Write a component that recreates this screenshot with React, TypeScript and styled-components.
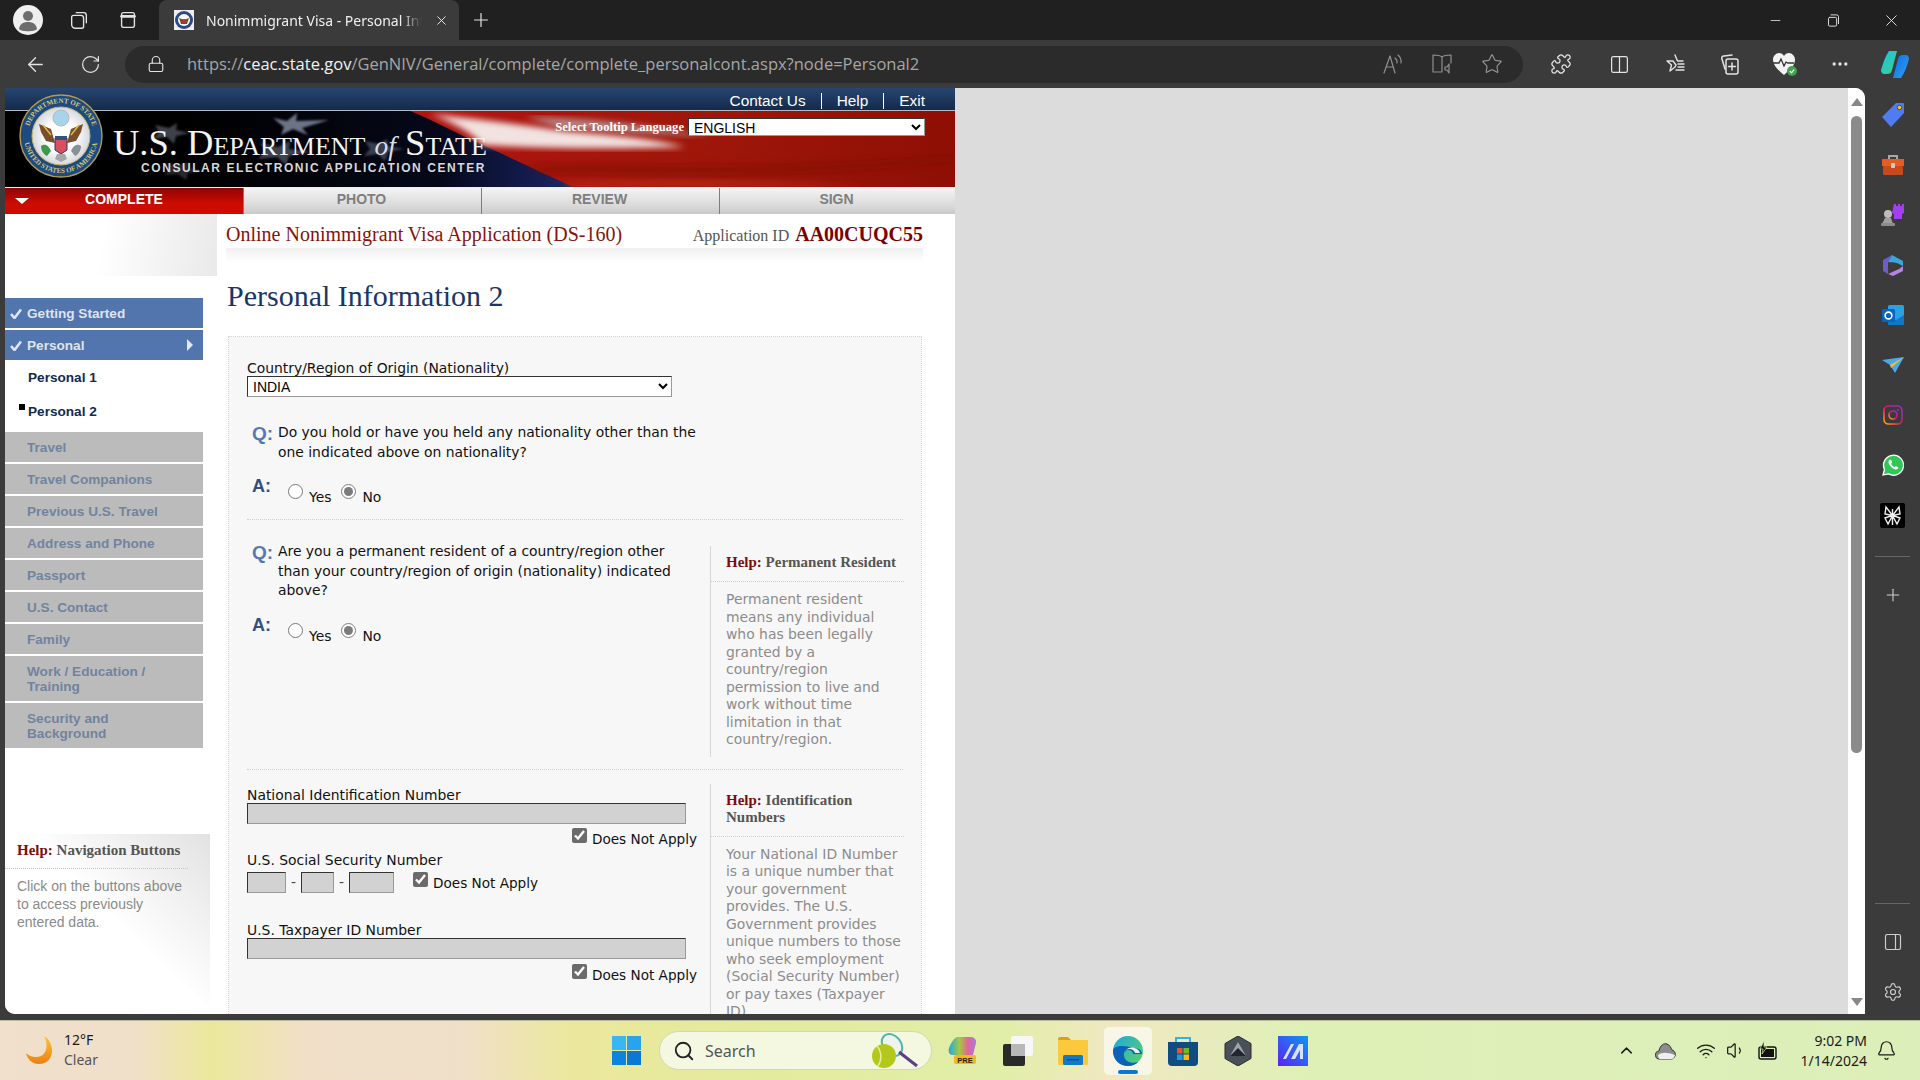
import type { ReactNode } from "react";
import styled, { createGlobalStyle } from "styled-components";
import {
  ArrowLeft,
  ChevronUp,
  Columns2,
  Ellipsis,
  Lock,
  Plus,
  Puzzle,
  RotateCw,
  Search,
  Settings,
  Star,
  Volume1,
  Wifi,
  X,
  Bell,
  PanelRight,
  Minus,
} from "lucide-react";

const GlobalStyle = createGlobalStyle`
  html, body {
    margin: 0;
    padding: 0;
    width: 100%;
    height: 100%;
    overflow: hidden;
    background: #3b3b3b;
  }
  * { box-sizing: border-box; }
`;

const Screen = styled.div`
  width: 1920px;
  height: 1080px;
  display: flex;
  flex-direction: column;
  overflow: hidden;
  background: #3b3b3b;
  font-family: "Noto Sans", sans-serif;
`;

/* browser chrome */
const TitleBar = styled.div`
  height: 40px;
  flex: none;
  display: flex;
  align-items: flex-end;
  background: #202020;
  color: #e8e8e8;
`;

const Slot = styled.div<{ $w?: number; $ml?: number }>`
  width: ${(p) => p.$w ?? 55}px;
  height: 36px;
  margin-left: ${(p) => p.$ml ?? 0}px;
  flex: none;
  display: flex;
  align-items: center;
  justify-content: center;
  color: #e4e4e4;
`;

const TitleSlot = styled(Slot)`
  height: 40px;
`;

const Tab = styled.div`
  width: 300px;
  height: 40px;
  flex: none;
  margin-left: 4px;
  padding: 0 10px 0 15px;
  display: flex;
  align-items: center;
  gap: 12px;
  background: #3b3b3b;
  border-radius: 8px 8px 0 0;
  font-size: 14px;
  color: #f0f0f0;
`;

const TabTitle = styled.span`
  flex: 1;
  white-space: nowrap;
  overflow: hidden;
  -webkit-mask-image: linear-gradient(90deg, #000 90%, transparent);
  mask-image: linear-gradient(90deg, #000 90%, transparent);
`;

const WindowControls = styled.div`
  margin-left: auto;
  display: flex;
`;

const Toolbar = styled.div`
  height: 48px;
  flex: none;
  display: flex;
  align-items: center;
  padding-left: 10px;
  background: #3b3b3b;
`;

const AddressPill = styled.div`
  width: 1398px;
  height: 37px;
  margin-left: 5px;
  flex: none;
  display: flex;
  align-items: center;
  background: #2b2b2b;
  border-radius: 19px;
  padding-right: 6px;
`;

const Url = styled.div`
  flex: 1;
  padding-bottom: 2px;
  font-family: "Open Sans", sans-serif;
  font-size: 16.5px;
  color: #a6a6a6;
  white-space: nowrap;
  b {
    font-weight: 400;
    color: #f2f2f2;
  }
`;

const ToolbarSep = styled.div`
  width: 1px;
  height: 28px;
  margin: 0 2px;
  background: #666;
`;

const Middle = styled.div`
  flex: 1;
  min-height: 0;
  display: flex;
`;

const Viewport = styled.div`
  width: 1860px;
  height: 926px;
  margin-left: 5px;
  flex: none;
  display: flex;
  background: #fff;
  overflow: hidden;
  border-radius: 0 10px 0 10px;
`;

const Gutter = styled.div`
  flex: 1;
  background: #dcdcdc;
`;

const Scrollbar = styled.div`
  width: 17px;
  flex: none;
  display: flex;
  flex-direction: column;
  align-items: center;
  justify-content: space-between;
  padding: 10px 0 8px;
  background: #fff;
`;

const ScrollTop = styled.div`
  display: flex;
  flex-direction: column;
  align-items: center;
`;

const ScrollArrow = styled.div<{ $down?: boolean }>`
  width: 0;
  height: 0;
  border-left: 6px solid transparent;
  border-right: 6px solid transparent;
  ${(p) => (p.$down ? "border-top: 8px solid #888;" : "border-bottom: 8px solid #888;")}
`;

const ScrollThumb = styled.div`
  width: 11px;
  height: 637px;
  margin-top: 10px;
  background: #8b8b8b;
  border-radius: 6px;
`;

const EdgeRail = styled.div`
  width: 55px;
  flex: none;
  display: flex;
  flex-direction: column;
  align-items: center;
  padding: 2px 0 3px;
  color: #cfcfcf;
`;

const RailSlot = styled.div`
  width: 55px;
  height: 50px;
  flex: none;
  display: flex;
  align-items: center;
  justify-content: center;
`;

const RailSep = styled.div<{ $top?: string }>`
  width: 35px;
  height: 1px;
  flex: none;
  margin-top: ${(p) => p.$top ?? "16px"};
  margin-bottom: 13px;
  background: #666;
`;

/* the visa site */
const Site = styled.div`
  width: 950px;
  flex: none;
  font-family: "DejaVu Sans", Verdana, sans-serif;
  font-size: 13.9px;
  color: #111;
`;

const Header = styled.header`
  position: relative;
`;

const TopBar = styled.div`
  height: 23px;
  display: flex;
  justify-content: flex-end;
  align-items: center;
  padding: 3px 30px 0 0;
  border-bottom: 1px solid #b4bac4;
  background: linear-gradient(180deg, #27466f, #142a4b);
  font-family: "Liberation Sans", Arial, sans-serif;
  font-size: 15.4px;
  color: #fff;
`;

const TopLink = styled.span<{ $sep?: boolean }>`
  padding-left: ${(p) => (p.$sep ? "15px" : 0)};
  margin-left: ${(p) => (p.$sep ? "15px" : 0)};
  border-left: ${(p) => (p.$sep ? "1px solid #fff" : "none")};
  line-height: 16px;
`;

const Banner = styled.div`
  position: relative;
  height: 77px;
  display: flex;
  justify-content: space-between;
  border-bottom: 1px solid #eee;
  background: #000;
  overflow: hidden;
`;

const BannerArt = styled.svg`
  position: absolute;
  inset: 0;
  width: 100%;
  height: 100%;
`;

const Brand = styled.div`
  position: relative;
  margin-left: 108px;
  padding-top: 14px;
  color: #f4f4f4;
`;

const BrandName = styled.div`
  font-family: "Liberation Serif", "Times New Roman", serif;
  font-size: 36.5px;
  line-height: 36px;
  font-variant: small-caps;
  white-space: nowrap;
  i {
    font-variant: normal;
    font-size: 27.5px;
    color: #d9dde6;
  }
`;

const BrandSub = styled.div`
  margin: -3px 0 0 28px;
  font-family: "Liberation Sans", Arial, sans-serif;
  font-size: 12px;
  line-height: 14px;
  font-weight: 700;
  letter-spacing: 1.57px;
  color: #d8d8d8;
  white-space: nowrap;
`;

const LangPicker = styled.div`
  position: relative;
  display: flex;
  align-items: center;
  align-self: flex-start;
  gap: 4px;
  margin: 7px 30px 0 0;
  font-family: "Liberation Serif", "Times New Roman", serif;
  font-size: 12.6px;
  font-weight: 700;
  color: #fff;
`;

const Select = styled.select<{ $w: number }>`
  width: ${(p) => p.$w}px;
  height: ${(p) => (p.$w > 300 ? 21 : 18)}px;
  padding: 0 1px;
  border-width: 1px;
  border-style: solid;
  border-color: #333 #999 #999 #333;
  border-radius: 0;
  background: #fff;
  font-family: "Liberation Sans", Arial, sans-serif;
  font-size: 14px;
  color: #000;
`;

const Seal = styled.svg`
  position: absolute;
  left: 14px;
  top: 6px;
  width: 84px;
  height: 84px;
`;

const Steps = styled.nav`
  height: 26px;
  display: flex;
`;

const Step = styled.div<{ $active?: boolean }>`
  position: relative;
  width: 238px;
  flex: none;
  display: flex;
  align-items: center;
  justify-content: center;
  padding: 0 ${(p) => (p.$active ? 0 : 2)}px 4px 0;
  font-family: "Liberation Sans", Arial, sans-serif;
  font-size: 14px;
  font-weight: 700;
  color: ${(p) => (p.$active ? "#fff" : "#7e7e7e")};
  background: ${(p) =>
    p.$active
      ? "linear-gradient(180deg, #8f0404, #cc0c00 60%)"
      : "linear-gradient(180deg, #f4f4f4, #d9d9d9 70%, #c9c9c9)"};
  border-left: ${(p) => (p.$active ? "none" : "1px solid #7d7d7d")};
  &:last-child {
    width: 236px;
  }
`;

const StepArrow = styled.span`
  position: absolute;
  left: 10px;
  top: 10px;
  border-left: 7px solid transparent;
  border-right: 7px solid transparent;
  border-top: 6px solid #fff;
`;

const Body = styled.div`
  display: flex;
`;

const LeftCol = styled.aside`
  width: 212px;
  flex: none;
`;

const LeftFade = styled.div`
  height: 62px;
  background: linear-gradient(100deg, #fff 45%, #e9e9e9);
`;

const NavList = styled.div`
  width: 198px;
  margin-top: 22px;
  display: flex;
  flex-direction: column;
  gap: 2px;
  font-family: "Liberation Sans", Arial, sans-serif;
  font-size: 13.6px;
  font-weight: 700;
`;

const NavItem = styled.div<{ $done?: boolean }>`
  position: relative;
  min-height: 30px;
  display: flex;
  align-items: center;
  padding: 0 20px 0 22px;
  line-height: 15px;
  background: ${(p) => (p.$done ? "#5275ae" : "#bbbbbb")};
  color: ${(p) => (p.$done ? "#dfe4ec" : "#71849f")};
`;

const NavTall = styled(NavItem)`
  min-height: 45px;
`;

const NavTick = styled.svg`
  position: absolute;
  left: 5px;
  top: 10px;
  width: 12px;
  height: 11px;
`;

const NavCaret = styled.span`
  position: absolute;
  right: 10px;
  top: 9px;
  border-top: 6px solid transparent;
  border-bottom: 6px solid transparent;
  border-left: 6px solid #e4e8f0;
`;

const SubItem = styled.div<{ $current?: boolean }>`
  position: relative;
  height: 35px;
  margin-top: ${(p) => (p.$current ? "-4px" : 0)};
  display: flex;
  align-items: center;
  padding: 0 0 ${(p) => (p.$current ? 2 : 4)}px 23px;
  color: #13294f;
  &::before {
    content: "";
    display: ${(p) => (p.$current ? "block" : "none")};
    position: absolute;
    left: 14px;
    top: 9px;
    width: 6px;
    height: 6px;
    background: #000;
  }
`;

const NavHelp = styled.div`
  width: 205px;
  height: 200px;
  margin-top: 86px;
  padding-top: 6px;
  background: linear-gradient(to bottom left, #e2e2e2, #fff 45%);
`;

const HelpHead = styled.div`
  font-family: "Liberation Serif", "Times New Roman", serif;
  font-size: 15px;
  line-height: 17px;
  font-weight: 700;
  color: #555;
  b {
    color: #7d0c0c;
  }
`;

const NavHelpHead = styled(HelpHead)`
  width: 183px;
  padding: 2px 0 9px 12px;
  border-bottom: 1px dotted #c4c4c4;
`;

const NavHelpText = styled.div`
  width: 180px;
  padding: 8px 0 0 12px;
  font-family: "Liberation Sans", Arial, sans-serif;
  font-size: 14px;
  line-height: 18px;
  color: #8a8a8a;
`;

const MainCol = styled.main`
  flex: 1;
  min-width: 0;
  padding: 0 32px 0 9px;
`;

const AppHead = styled.div`
  height: 34px;
  display: flex;
  align-items: center;
  justify-content: space-between;
  padding-top: 6px;
  font-family: "Liberation Serif", "Times New Roman", serif;
`;

const AppTitle = styled.span`
  font-size: 20px;
  color: #85140c;
`;

const AppId = styled.span`
  font-size: 16px;
  color: #555;
  b {
    margin-left: 2px;
    font-size: 20px;
    color: #7d0000;
  }
`;

const AppStrip = styled.div`
  height: 14px;
  background: linear-gradient(180deg, #f0f0f0, #fff);
`;

const PageTitle = styled.h1`
  margin: 17px 0 0 1px;
  height: 57px;
  font-family: "Liberation Serif", "Times New Roman", serif;
  font-size: 30px;
  line-height: 34px;
  font-weight: 400;
  color: #1c3564;
`;

const FormBox = styled.section`
  width: 694px;
  min-height: 800px;
  margin-left: 2px;
  padding: 23px 18px 0;
  background: #f7f7f7;
  border: 1px dotted #e2d5bd;
`;

const FieldLabel = styled.div<{ $gap?: number }>`
  line-height: 16px;
  margin-bottom: ${(p) => p.$gap ?? 0}px;
`;

const QRow = styled.div<{ $top?: number }>`
  display: flex;
  width: 463px;
  margin-top: ${(p) => p.$top ?? 0}px;
  line-height: 19.5px;
`;

const QMark = styled.span<{ $answer?: boolean }>`
  width: 31px;
  flex: none;
  padding-left: 5px;
  font-family: "Liberation Sans", Arial, sans-serif;
  font-size: ${(p) => (p.$answer ? 18 : 19)}px;
  font-weight: 700;
  line-height: 21px;
  color: ${(p) => (p.$answer ? "#33507f" : "#5579b3")};
`;

const QText = styled.div`
  width: 420px;
`;

const ARow = styled.div`
  display: flex;
  align-items: flex-start;
  margin-top: 14px;
  height: 26px;
`;

const RadioGroup = styled.label`
  display: flex;
  align-items: flex-start;
  line-height: 16px;
  margin-right: 10px;
  &:first-of-type {
    margin-left: 10px;
  }
  span {
    margin: 13px 0 0 6px;
  }
`;

const Radio = styled.input`
  width: 15px;
  height: 15px;
  margin: 8px 0 0;
  accent-color: #7c7c7c;
`;

const Divider = styled.div<{ $top: number }>`
  margin-top: ${(p) => p.$top}px;
  border-top: 1px dotted #cfcfcf;
`;

const SplitRow = styled.div<{ $top: number }>`
  display: flex;
  margin-top: ${(p) => p.$top}px;
`;

const FormLeft = styled.div<{ $pad?: number }>`
  width: 463px;
  flex: none;
  padding-top: ${(p) => p.$pad ?? 0}px;
`;

const HelpCol = styled.div<{ $top?: number }>`
  flex: 1;
  margin-top: ${(p) => p.$top ?? 0}px;
  border-left: 1px solid #d6d6d6;
`;

const HelpColHead = styled(HelpHead)`
  padding: 8px 0 10px 15px;
  border-bottom: 1px dotted #cfcfcf;
`;

const HelpColText = styled.div`
  width: 193px;
  padding: 9px 0 8px 15px;
  line-height: 17.5px;
  color: #8c8c8c;
`;

const TextField = styled.input`
  display: block;
  width: 439px;
  height: 21px;
  padding: 0;
  border-width: 1px;
  border-style: solid;
  border-color: #333 #999 #999 #333;
  background: #d2d2d2;
`;

const ShortField = styled(TextField)<{ $w: number }>`
  width: ${(p) => p.$w}px;
`;

const CheckRow = styled.label<{ $top?: number }>`
  display: flex;
  justify-content: flex-end;
  align-items: flex-start;
  width: 450px;
  height: 24px;
  margin-top: ${(p) => p.$top ?? 4}px;
`;

const Check = styled.input`
  width: 15px;
  height: 15px;
  margin: 0 5px 0 0;
  accent-color: #6b6b6b;
`;

const CheckText = styled.span`
  margin-top: 3px;
  font-size: 13.6px;
  line-height: 16px;
`;

const SsnRow = styled.div`
  display: flex;
  align-items: flex-start;
  margin-bottom: 29px;
`;

const Dash = styled.span`
  width: 15px;
  text-align: center;
  line-height: 21px;
  color: #444;
`;

const SsnCheck = styled.label`
  display: flex;
  align-items: flex-start;
  margin-left: 19px;
`;

/* taskbar */
const Taskbar = styled.footer`
  height: 60px;
  flex: none;
  display: flex;
  align-items: center;
  border-top: 1px solid #b9bb9c;
  background: linear-gradient(
    90deg,
    #f0e0cc 0,
    #f0dfc8 7%,
    #ebe89c 11%,
    #f1dfc8 16%,
    #f0dfc8 24%,
    #ebe89c 30%,
    #e3eb9e 40%,
    #e1eea8 52%,
    #f0e8c2 58%,
    #dff0b6 68%,
    #dcefba 100%
  );
  color: #1b1b1b;
  font-size: 14px;
`;

const Weather = styled.div`
  width: 612px;
  flex: none;
  display: flex;
  align-items: center;
  padding: 0 0 2px 25px;
  gap: 9px;
`;

const WeatherText = styled.div`
  line-height: 20px;
  span {
    display: block;
    color: #555;
  }
`;

const SearchPill = styled.div`
  width: 273px;
  height: 39px;
  margin-left: 18px;
  flex: none;
  display: flex;
  align-items: center;
  gap: 10px;
  padding: 0 10px 0 13px;
  background: #f4f8e0;
  border: 1px solid #d3d8ae;
  border-radius: 20px;
  color: #555;
  font-size: 16px;
  span {
    flex: 1;
  }
`;

const Apps = styled.div`
  display: flex;
  margin-left: 7px;
  gap: 7px;
`;

const AppIcon = styled.div<{ $active?: boolean }>`
  position: relative;
  width: 48px;
  height: 48px;
  display: flex;
  align-items: center;
  justify-content: center;
  border-radius: 5px;
  background: ${(p) => (p.$active ? "rgba(255,255,255,.62)" : "transparent")};
  &::after {
    content: "";
    display: ${(p) => (p.$active ? "block" : "none")};
    position: absolute;
    left: 14px;
    bottom: 1px;
    width: 20px;
    height: 4px;
    border-radius: 2px;
    background: #0a78d4;
  }
`;

const Tray = styled.div`
  margin-left: auto;
  display: flex;
  align-items: center;
  padding-right: 15px;
`;

const TraySlot = styled.div<{ $w: number }>`
  width: ${(p) => p.$w}px;
  display: flex;
  justify-content: center;
`;

const Clock = styled.div`
  width: 76px;
  margin-left: 3px;
  text-align: right;
  line-height: 20px;
  white-space: nowrap;
`;

const Wide = ({ children, h = 20 }: { children: ReactNode; h?: number }) => (
  <svg width={h} height={h} viewBox="0 0 24 24" fill="none" stroke="currentColor" strokeWidth="1.5" strokeLinecap="round" strokeLinejoin="round">
    {children}
  </svg>
);

const Avatar = () => (
  <svg width="32" height="32" viewBox="0 0 32 32">
    <circle cx="16" cy="16" r="15" fill="#efefef" />
    <circle cx="16" cy="12" r="5" fill="#6d6d6d" />
    <path d="M7 25c1-6 5-7 9-7s8 1 9 7c-2 3-16 3-18 0z" fill="#6d6d6d" />
  </svg>
);

const DosSeal = ({ size = 20 }: { size?: number }) => (
  <svg width={size} height={size} viewBox="0 0 20 20">
    <rect width="20" height="20" fill="#eee" />
    <circle cx="10" cy="10" r="9" fill="#2a4a86" />
    <circle cx="10" cy="10" r="6" fill="#fff" />
    <path d="M5 8l5 2 5-2-2 6h-6z" fill="#7a4a22" />
    <rect x="8.5" y="9" width="3" height="4" fill="#b33" />
  </svg>
);

const FlagArt = () => (
  <BannerArt viewBox="0 0 950 76" preserveAspectRatio="none">
    <defs>
      <linearGradient id="navy" x1="0" x2="1">
        <stop offset="0" stopColor="#000" />
        <stop offset="0.6" stopColor="#050818" />
        <stop offset="0.85" stopColor="#141f55" />
        <stop offset="1" stopColor="#24357a" />
      </linearGradient>
      <linearGradient id="red" x1="0" x2="1">
        <stop offset="0" stopColor="#b01410" />
        <stop offset="0.5" stopColor="#a0170a" />
        <stop offset="1" stopColor="#8f0f05" />
      </linearGradient>
      <filter id="soft">
        <feGaussianBlur stdDeviation="3" />
      </filter>
      <filter id="softer">
        <feGaussianBlur stdDeviation="1.2" />
      </filter>
    </defs>
    <path d="M180 0H430L600 76H180z" fill="url(#navy)" />
    <path d="M405 0H950V76H568L478 34C450 22 430 10 405 0z" fill="url(#red)" />
    <path d="M425 3C470 8 520 14 560 20 610 24 650 28 680 36 620 38 540 38 478 34 465 20 445 10 425 3z" fill="#f2e2e0" filter="url(#soft)" />
    <path d="M520 6C580 7 640 13 705 26 650 22 600 20 556 17z" fill="#b98a88" filter="url(#soft)" />
    <path d="M520 54C640 50 760 62 950 44V50C780 70 640 62 540 64z" fill="#7d1005" opacity="0.5" filter="url(#soft)" />
    <path d="M560 72C680 66 780 70 860 76H560z" fill="#c23a1c" opacity="0.5" filter="url(#soft)" />
    <g fill="#9aa3ba" filter="url(#softer)">
      <path d="M268 7l14 3 10-8-1 8 33-1-27 8 6 7-15-6-12 6 3-8z" opacity="0.7" />
      <path d="M150 14l14 3 8-5-1 7 14 3-14 3-2 8-7-7-14 2 6-7z" opacity="0.4" />
      <path d="M255 32l18 4 12-6-1 8 22 3-22 4-3 9-9-8-19 2 8-8z" opacity="0.4" />
      <path d="M360 30l14 3 8-5 1 7 16 3-16 3-3 9-7-7-14 2 6-7z" opacity="0.35" />
      <path d="M160 52l14 2 9-3v6l16 3-16 2-2 7-8-6-14 1 6-6z" opacity="0.25" />
    </g>
  </BannerArt>
);

const SealArt = () => (
  <Seal viewBox="0 0 84 84">
    <defs>
      <path id="ringTop" d="M9 42a33 33 0 0 1 66 0" />
      <path id="ringBot" d="M5 42a37 37 0 0 0 74 0" />
      <radialGradient id="sealBg">
        <stop offset="0.5" stopColor="#fff" />
        <stop offset="1" stopColor="#d5d8dc" />
      </radialGradient>
    </defs>
    <circle cx="42" cy="42" r="41" fill="#1d4a80" stroke="#b59c4a" strokeWidth="1.4" />
    <circle cx="42" cy="42" r="29" fill="url(#sealBg)" stroke="#c4b26a" />
    <text fontFamily="Liberation Serif, serif" fontSize="7" fontWeight="700" fill="#d8c878">
      <textPath href="#ringTop" startOffset="50%" textAnchor="middle">DEPARTMENT OF STATE</textPath>
    </text>
    <text fontFamily="Liberation Serif, serif" fontSize="7" fontWeight="700" fill="#d8c878">
      <textPath href="#ringBot" startOffset="50%" textAnchor="middle">UNITED STATES OF AMERICA</textPath>
    </text>
    <circle cx="42" cy="24" r="8" fill="#a8d4ea" stroke="#b8b8b8" />
    <path d="M20 30l12 5 4 14-9-2-5-9zM64 30l-12 5-4 14 9-2 5-9z" fill="#7a4e2a" />
    <path d="M24 31l8 10M60 31l-8 10" stroke="#d6bb4a" strokeWidth="1.5" />
    <path d="M36 44h12v12l-6 4-6-4z" fill="#d9505a" stroke="#1d3a6e" />
    <rect x="36" y="42" width="12" height="4" fill="#33507f" />
    <path d="M22 52c4-3 8 0 10 5l-4 5c-4-2-6-6-6-10z" fill="#3b9a4a" />
    <path d="M62 52c-4-3-8 0-10 5l4 5c4-2 6-6 6-10z" fill="#8a8f96" />
    <path d="M38 60h8l2 5-6 3-6-3z" fill="#a7a7a7" />
  </Seal>
);

const Tick = () => (
  <NavTick viewBox="0 0 12 11">
    <path d="M1 6l3.5 4L11 1.5" fill="none" stroke="#dfe6f2" strokeWidth="2.6" />
  </NavTick>
);

/* rail and taskbar logos */
const TagLogo = () => (
  <svg width="24" height="26" viewBox="0 0 24 26">
    <path d="M15 1h7a1 1 0 0 1 1 1v9L10 25 1 15z" fill="#4f7cf0" />
    <circle cx="18.5" cy="5.5" r="2.2" fill="#f3c91e" stroke="#333" strokeWidth=".8" />
  </svg>
);
const ToolboxLogo = () => (
  <svg width="24" height="22" viewBox="0 0 24 22">
    <path d="M8 5V2h8v3" fill="none" stroke="#a8a8a8" strokeWidth="2" />
    <rect x="1" y="5" width="22" height="7" fill="#e65c25" />
    <rect x="2" y="12" width="20" height="9" rx="1" fill="#c9481c" />
    <rect x="10" y="9" width="4" height="5" rx="1" fill="#ccc" />
  </svg>
);
const ChessLogo = () => (
  <svg width="24" height="24" viewBox="0 0 24 24">
    <path d="M13 1h2v2h2V1h2v2h2V1h2v9l-2 1v5h-8v-5l-2-1z" fill="#a23ff0" />
    <circle cx="7" cy="11" r="4" fill="#bdbdbd" />
    <path d="M4 15h6l2 6H1z" fill="#a0a0a0" />
    <rect x="0" y="20" width="14" height="3" rx="1" fill="#8d8d8d" />
  </svg>
);
const M365Logo = () => (
  <svg width="22" height="23" viewBox="0 0 22 23">
    <path d="M10 1L1 6v11l5 3V8z" fill="#6d5bd0" />
    <path d="M10 1l11 6v5l-6-3-9-1z" fill="#39a7dc" />
    <path d="M21 12v5l-10 5-5-2 11-5z" fill="#b483e6" />
    <circle cx="11" cy="12" r="3.6" fill="#3b3b3b" />
  </svg>
);
const OutlookLogo = () => (
  <svg width="22" height="22" viewBox="0 0 22 22">
    <rect x="6" y="1" width="16" height="20" rx="1.5" fill="#27a3e3" />
    <path d="M6 11l8 5 8-5v10H6z" fill="#1178c8" />
    <rect x="0" y="5" width="13" height="13" rx="1.5" fill="#0b64c0" />
    <circle cx="6.5" cy="11.5" r="3.4" fill="none" stroke="#fff" strokeWidth="1.6" />
  </svg>
);
const SendLogo = () => (
  <svg width="22" height="16" viewBox="0 0 22 16">
    <path d="M0 3L22 0 13 16 8 8z" fill="#4aa8ea" />
    <path d="M8 8L22 0 9 11z" fill="#f3bc2c" />
  </svg>
);
const InstaLogo = () => (
  <svg width="20" height="20" viewBox="0 0 20 20" fill="none">
    <defs>
      <linearGradient id="insta" x1="0" y1="1" x2="1" y2="0">
        <stop offset="0" stopColor="#f9b016" />
        <stop offset="0.5" stopColor="#e3126f" />
        <stop offset="1" stopColor="#8b2fe0" />
      </linearGradient>
    </defs>
    <rect x="1" y="1" width="18" height="18" rx="4.5" stroke="url(#insta)" strokeWidth="1.6" />
    <circle cx="10" cy="10" r="4" stroke="url(#insta)" strokeWidth="1.6" />
    <circle cx="15" cy="5" r="1" fill="#c31fa6" />
  </svg>
);
const WhatsAppLogo = () => (
  <svg width="22" height="22" viewBox="0 0 22 22">
    <path d="M1 21l1.5-5.5A10 10 0 1 1 6.6 19.9z" fill="#31c757" stroke="#fff" strokeWidth="1.3" />
    <path d="M7.5 5.8c-1.3 1-1.4 2.8 0 5 1.4 2.3 3.6 4.2 6 4.7 1.5.2 2.7-.8 2.9-2l-2.5-1.5-1.2 1.2c-1.5-.6-3-2.2-3.6-3.7l1-1.2-1.1-2.6z" fill="#fff" />
  </svg>
);
const BugLogo = () => (
  <svg width="25" height="25" viewBox="0 0 25 25">
    <rect width="25" height="25" rx="2" fill="#000" />
    <path d="M12.5 12.5L6 4 5 11l7.5 1.5L5 15l3 6zM12.5 12.5L19 4l1 7-7.5 1.5L20 15l-3 6zM12.5 6v16" fill="none" stroke="#eee" strokeWidth="1.4" />
  </svg>
);
const CopilotLogo = ({ s = 30 }: { s?: number }) => (
  <svg width={s} height={s} viewBox="0 0 30 30">
    <defs>
      <linearGradient id="cpA" x1="0" y1="0" x2="1" y2="1">
        <stop offset="0" stopColor="#19c3e6" />
        <stop offset="1" stopColor="#3fd08a" />
      </linearGradient>
      <linearGradient id="cpB" x1="0" y1="0" x2="1" y2="1">
        <stop offset="0" stopColor="#0f6fe0" />
        <stop offset="1" stopColor="#2ea0f5" />
      </linearGradient>
    </defs>
    <path d="M9 2h8l-5 19c-1 3-2 4-5 4H4c-2 0-3-2-3-4 2-7 4-13 8-19z" fill="url(#cpA)" />
    <path d="M21 29h-8l5-19c1-3 2-4 5-4h3c2 0 3 2 3 4-2 7-4 13-8 19z" fill="url(#cpB)" />
  </svg>
);
const StartLogo = () => (
  <svg width="29" height="29" viewBox="0 0 29 29">
    <rect width="14" height="14" fill="#3bb6f5" />
    <rect x="15" width="14" height="14" fill="#28a3ee" />
    <rect y="15" width="14" height="14" fill="#0c84dc" />
    <rect x="15" y="15" width="14" height="14" fill="#0a78d4" />
  </svg>
);
const MoonLogo = () => (
  <svg width="30" height="30" viewBox="0 0 30 30">
    <defs>
      <linearGradient id="moon" x1="0" y1="0" x2="0" y2="1">
        <stop offset="0" stopColor="#f6c63c" />
        <stop offset="1" stopColor="#ee7f12" />
      </linearGradient>
    </defs>
    <path d="M19 1c5 9 2 18-3 20-5 2-11 1-15-3 1 6 6 11 13 11 8 0 13-6 13-13C27 9 24 4 19 1z" fill="url(#moon)" />
  </svg>
);
const RacketLogo = () => (
  <svg width="52" height="38" viewBox="0 0 52 38">
    <ellipse cx="23" cy="13" rx="9" ry="12" transform="rotate(-38 23 13)" fill="#eef4ea" stroke="#4fb5ad" strokeWidth="2" />
    <path d="M30 20l18 14" stroke="#5a3f84" strokeWidth="3" />
    <circle cx="15" cy="24" r="12" fill="#b3c81a" />
    <path d="M8 14c5 6 5 14 1 20" fill="none" stroke="#e4ee9a" strokeWidth="1.5" />
  </svg>
);
const CopilotPre = () => (
  <svg width="30" height="30" viewBox="0 0 30 30">
    <defs>
      <linearGradient id="preA" x1="0" y1="0" x2="1" y2="0">
        <stop offset="0" stopColor="#23a8e8" />
        <stop offset=".4" stopColor="#a6c93c" />
        <stop offset=".7" stopColor="#e2639a" />
        <stop offset="1" stopColor="#a87ae8" />
      </linearGradient>
    </defs>
    <path d="M9 1h14c3 0 6 3 5 6l-3 12H4C1 19 0 15 1 12 3 7 5 3 9 1z" fill="url(#preA)" />
    <rect x="6" y="19" width="22" height="9" rx="2" fill="#f4b51e" />
    <text x="17" y="26.5" textAnchor="middle" fontFamily="Liberation Sans, sans-serif" fontSize="7.5" fontWeight="700" fill="#222">PRE</text>
  </svg>
);
const TaskViewLogo = () => (
  <svg width="30" height="30" viewBox="0 0 30 30">
    <rect x="8" y="0" width="22" height="20" rx="2" fill="#f7f7f7" />
    <rect x="0" y="8" width="22" height="22" rx="2" fill="#2a2a2a" />
    <rect x="8" y="8" width="14" height="12" fill="#b8b8b8" />
  </svg>
);
const FolderLogo = () => (
  <svg width="30" height="28" viewBox="0 0 30 28">
    <path d="M0 2a2 2 0 0 1 2-2h8l3 3h-13z" fill="#dfa10f" />
    <rect y="3" width="30" height="25" rx="1" fill="#fcc93c" />
    <rect x="5" y="18" width="20" height="10" rx="1.5" fill="#1478c8" />
    <rect x="9" y="22" width="12" height="1.5" fill="#0c4f8a" />
  </svg>
);
const EdgeLogo = () => (
  <svg width="30" height="30" viewBox="0 0 30 30">
    <defs>
      <linearGradient id="edgeA" x1="0" y1="0" x2="1" y2="0.8">
        <stop offset="0" stopColor="#20a8dc" />
        <stop offset="1" stopColor="#55d06e" />
      </linearGradient>
    </defs>
    <circle cx="15" cy="15" r="15" fill="url(#edgeA)" />
    <path d="M0 15c0 9 7 15 15 15 5 0 8-2 10-4-6 2-13 0-14-6-.7-3 1-6 4-6 3 0 5 2 5 4h9c0-4-4-6-9-6-8-3-20-3-20 3z" fill="#0b62b8" />
    <path d="M13 14c3-2 8-1 9 3h5c-1-5-10-8-14-3z" fill="#fff" opacity="0.9" />
  </svg>
);
const StoreLogo = () => (
  <svg width="30" height="30" viewBox="0 0 30 30">
    <path d="M8 6V2h14v4" fill="none" stroke="#2fb4ea" strokeWidth="2" />
    <path d="M0 6h30v20a4 4 0 0 1-4 4H4a4 4 0 0 1-4-4z" fill="#124b80" />
    <rect x="9" y="12" width="5.5" height="5.5" fill="#e8552a" />
    <rect x="15.5" y="12" width="5.5" height="5.5" fill="#6eb82c" />
    <rect x="9" y="18.5" width="5.5" height="5.5" fill="#1b9be6" />
    <rect x="15.5" y="18.5" width="5.5" height="5.5" fill="#f9b916" />
  </svg>
);
const HexLogo = () => (
  <svg width="28" height="30" viewBox="0 0 28 30">
    <path d="M14 0l13 7.5v15L14 30 1 22.5v-15z" fill="#4a5058" stroke="#2a2d31" />
    <path d="M14 6l8 14H6z" fill="#a0a6ad" />
    <path d="M14 12l8 8H6z" fill="#23262a" />
  </svg>
);
const BlueAppLogo = () => (
  <svg width="30" height="30" viewBox="0 0 30 30">
    <defs>
      <linearGradient id="blueA" x1="0" y1="1" x2="1" y2="0">
        <stop offset="0" stopColor="#5a22f0" />
        <stop offset="1" stopColor="#0f96f5" />
      </linearGradient>
    </defs>
    <rect width="30" height="30" fill="url(#blueA)" />
    <path d="M5 23L13 8h3L8 23zM13 23l8-15h4v15h-3v-9l-5 9z" fill="#d6e4ff" />
  </svg>
);

export default function App() {
  return (
    <>
      <GlobalStyle />
      <Screen>
        <TitleBar>
          <TitleSlot $w={56}>
            <Avatar />
          </TitleSlot>
          <TitleSlot $w={45}>
            <Wide h={22}>
              <path d="M9 4h8a3 3 0 0 1 3 3v8M6 7h8a3 3 0 0 1 3 3v9a2 2 0 0 1-2 2H8a4 4 0 0 1-4-4V9a2 2 0 0 1 2-2z" />
            </Wide>
          </TitleSlot>
          <TitleSlot $w={54}>
            <Wide h={22}>
              <rect x="5" y="4" width="14" height="16" rx="2" />
              <path d="M5 8h14" strokeWidth="3" />
            </Wide>
          </TitleSlot>
          <Tab>
            <DosSeal />
            <TabTitle>Nonimmigrant Visa - Personal Information</TabTitle>
            <X size={15} strokeWidth={1.5} />
          </Tab>
          <TitleSlot $w={44}>
            <Plus size={22} strokeWidth={1.3} />
          </TitleSlot>
          <WindowControls>
            <TitleSlot $w={58}>
              <Minus size={15} strokeWidth={1.3} />
            </TitleSlot>
            <TitleSlot $w={58}>
              <Wide h={15}>
                <rect x="4" y="7" width="13" height="14" rx="2" />
                <path d="M8 3h9a3 3 0 0 1 3 3v11" />
              </Wide>
            </TitleSlot>
            <TitleSlot $w={58}>
              <X size={19} strokeWidth={1.2} />
            </TitleSlot>
          </WindowControls>
        </TitleBar>

        <Toolbar>
          <Slot $w={50}>
            <ArrowLeft size={23} strokeWidth={1.4} />
          </Slot>
          <Slot $w={60}>
            <RotateCw size={21} strokeWidth={1.4} />
          </Slot>
          <AddressPill>
            <Slot $w={62}>
              <Lock size={18} strokeWidth={1.5} />
            </Slot>
            <Url>
              https://<b>ceac.state.gov</b>/GenNIV/General/complete/complete_personalcont.aspx?node=Personal2
            </Url>
            <Slot $w={50}>
              <Wide h={24}>
                <path d="M4 21L10 4l5 17M6 15h7M15 6a5 5 0 0 1 2 5M18 3a9 9 0 0 1 3 8" stroke="#8f8f8f" strokeWidth="1.2" />
              </Wide>
            </Slot>
            <Slot $w={50}>
              <Wide h={24}>
                <path d="M12 5C10 3 7 3 3 3v17h9M12 5c2-2 5-2 9-2v8M12 5v15M15 15h2l2-3v9l-2-3h-2z" stroke="#8f8f8f" strokeWidth="1.2" />
              </Wide>
            </Slot>
            <Slot $w={50}>
              <Star size={22} strokeWidth={1.2} color="#999" />
            </Slot>
          </AddressPill>
          <Slot $ml={10}>
            <Puzzle size={22} strokeWidth={1.4} />
          </Slot>
          <ToolbarSep />
          <Slot>
            <Columns2 size={21} strokeWidth={1.4} />
          </Slot>
          <Slot>
            <Wide h={24}>
              <path d="M12 3l2.5 6H20M13 13l-1 2-5 4 1.5-6L4 9h6zM15 12h6M15 15h6M13 18h8" strokeWidth="1.4" />
            </Wide>
          </Slot>
          <Slot>
            <Wide h={24}>
              <path d="M7 17L4 7a2 2 0 0 1 2-3l8-1" />
              <rect x="8" y="7" width="12" height="15" rx="2" />
              <path d="M14 11v7M10.5 14.5h7" />
            </Wide>
          </Slot>
          <Slot>
            <svg width="26" height="26" viewBox="0 0 26 26">
              <path d="M12 24C5 18 1 14 1 8.5 1 5 4 2 7 2c2 0 4 1 5 3 1-2 3-3 5-3 3 0 6 3 6 6.5C23 14 19 18 12 24z" fill="#f2f2f2" />
              <path d="M1 12h6l2-4 3 7 2-4 2 1h6" fill="none" stroke="#333" strokeWidth="1.3" />
              <circle cx="20" cy="20" r="5" fill="#3fa34d" />
              <path d="M17.8 20l1.6 1.8 2.8-3.3" fill="none" stroke="#fff" strokeWidth="1.2" />
            </svg>
          </Slot>
          <Slot>
            <Ellipsis size={20} strokeWidth={2} />
          </Slot>
          <Slot>
            <CopilotLogo />
          </Slot>
        </Toolbar>

        <Middle>
          <Viewport>
            <Site>
              <Header>
                <TopBar>
                  <TopLink>Contact Us</TopLink>
                  <TopLink $sep>Help</TopLink>
                  <TopLink $sep>Exit</TopLink>
                </TopBar>
                <Banner>
                  <FlagArt />
                  <Brand>
                    <BrandName>
                      U.S. Department <i>of</i> State
                    </BrandName>
                    <BrandSub>CONSULAR ELECTRONIC APPLICATION CENTER</BrandSub>
                  </Brand>
                  <LangPicker>
                    <span>Select Tooltip Language</span>
                    <Select $w={237} defaultValue="ENGLISH">
                      <option>ENGLISH</option>
                    </Select>
                  </LangPicker>
                </Banner>
                <SealArt />
              </Header>
              <Steps>
                <Step $active>
                  <StepArrow />
                  COMPLETE
                </Step>
                <Step>PHOTO</Step>
                <Step>REVIEW</Step>
                <Step>SIGN</Step>
              </Steps>

              <Body>
                <LeftCol>
                  <LeftFade />
                  <NavList>
                    <NavItem $done>
                      <Tick />
                      Getting Started
                    </NavItem>
                    <NavItem $done>
                      <Tick />
                      Personal
                      <NavCaret />
                    </NavItem>
                    <SubItem>Personal 1</SubItem>
                    <SubItem $current>Personal 2</SubItem>
                    <NavItem>Travel</NavItem>
                    <NavItem>Travel Companions</NavItem>
                    <NavItem>Previous U.S. Travel</NavItem>
                    <NavItem>Address and Phone</NavItem>
                    <NavItem>Passport</NavItem>
                    <NavItem>U.S. Contact</NavItem>
                    <NavItem>Family</NavItem>
                    <NavTall>Work / Education / Training</NavTall>
                    <NavTall>Security and Background</NavTall>
                  </NavList>
                  <NavHelp>
                    <NavHelpHead>
                      <b>Help:</b> Navigation Buttons
                    </NavHelpHead>
                    <NavHelpText>Click on the buttons above to access previously entered data.</NavHelpText>
                  </NavHelp>
                </LeftCol>

                <MainCol>
                  <AppHead>
                    <AppTitle>Online Nonimmigrant Visa Application (DS-160)</AppTitle>
                    <AppId>
                      Application ID <b>AA00CUQC55</b>
                    </AppId>
                  </AppHead>
                  <AppStrip />
                  <PageTitle>Personal Information 2</PageTitle>
                  <FormBox>
                    <FieldLabel>Country/Region of Origin (Nationality)</FieldLabel>
                    <Select $w={425} defaultValue="INDIA">
                      <option>INDIA</option>
                    </Select>

                    <QRow $top={26}>
                      <QMark>Q:</QMark>
                      <QText>Do you hold or have you held any nationality other than the one indicated above on nationality?</QText>
                    </QRow>
                    <ARow>
                      <QMark $answer>A:</QMark>
                      <RadioGroup>
                        <Radio type="radio" name="other" />
                        <span>Yes</span>
                      </RadioGroup>
                      <RadioGroup>
                        <Radio type="radio" name="other" defaultChecked />
                        <span>No</span>
                      </RadioGroup>
                    </ARow>
                    <Divider $top={17} />

                    <SplitRow $top={22}>
                      <FormLeft>
                        <QRow>
                          <QMark>Q:</QMark>
                          <QText>Are you a permanent resident of a country/region other than your country/region of origin (nationality) indicated above?</QText>
                        </QRow>
                        <ARow>
                          <QMark $answer>A:</QMark>
                          <RadioGroup>
                            <Radio type="radio" name="perm" />
                            <span>Yes</span>
                          </RadioGroup>
                          <RadioGroup>
                            <Radio type="radio" name="perm" defaultChecked />
                            <span>No</span>
                          </RadioGroup>
                        </ARow>
                      </FormLeft>
                      <HelpCol $top={4}>
                        <HelpColHead>
                          <b>Help:</b> Permanent Resident
                        </HelpColHead>
                        <HelpColText>
                          Permanent resident means any individual who has been legally granted by a country/region permission to live and work without time limitation in that country/region.
                        </HelpColText>
                      </HelpCol>
                    </SplitRow>
                    <Divider $top={12} />

                    <SplitRow $top={14}>
                      <FormLeft $pad={3}>
                        <FieldLabel>National Identification Number</FieldLabel>
                        <TextField disabled />
                        <CheckRow>
                          <Check type="checkbox" defaultChecked />
                          <CheckText>Does Not Apply</CheckText>
                        </CheckRow>
                        <FieldLabel $gap={4}>U.S. Social Security Number</FieldLabel>
                        <SsnRow>
                          <ShortField $w={39} disabled />
                          <Dash>-</Dash>
                          <ShortField $w={33} disabled />
                          <Dash>-</Dash>
                          <ShortField $w={45} disabled />
                          <SsnCheck>
                            <Check type="checkbox" defaultChecked />
                            <CheckText>Does Not Apply</CheckText>
                          </SsnCheck>
                        </SsnRow>
                        <FieldLabel>U.S. Taxpayer ID Number</FieldLabel>
                        <TextField disabled />
                        <CheckRow $top={5}>
                          <Check type="checkbox" defaultChecked />
                          <CheckText>Does Not Apply</CheckText>
                        </CheckRow>
                      </FormLeft>
                      <HelpCol>
                        <HelpColHead>
                          <b>Help:</b> Identification Numbers
                        </HelpColHead>
                        <HelpColText>
                          Your National ID Number is a unique number that your government provides. The U.S. Government provides unique numbers to those who seek employment (Social Security Number) or pay taxes (Taxpayer ID).
                        </HelpColText>
                      </HelpCol>
                    </SplitRow>
                  </FormBox>
                </MainCol>
              </Body>
            </Site>
            <Gutter />
            <Scrollbar>
              <ScrollTop>
                <ScrollArrow />
                <ScrollThumb />
              </ScrollTop>
              <ScrollArrow $down />
            </Scrollbar>
          </Viewport>
          <EdgeRail>
            <RailSlot><TagLogo /></RailSlot>
            <RailSlot><ToolboxLogo /></RailSlot>
            <RailSlot><ChessLogo /></RailSlot>
            <RailSlot><M365Logo /></RailSlot>
            <RailSlot><OutlookLogo /></RailSlot>
            <RailSlot><SendLogo /></RailSlot>
            <RailSlot><InstaLogo /></RailSlot>
            <RailSlot><WhatsAppLogo /></RailSlot>
            <RailSlot><BugLogo /></RailSlot>
            <RailSep />
            <RailSlot><Plus size={20} strokeWidth={1.3} /></RailSlot>
            <RailSep $top="auto" />
            <RailSlot><PanelRight size={20} strokeWidth={1.4} /></RailSlot>
            <RailSlot><Settings size={20} strokeWidth={1.4} /></RailSlot>
          </EdgeRail>
        </Middle>

        <Taskbar>
          <Weather>
            <MoonLogo />
            <WeatherText>
              12°F
              <span>Clear</span>
            </WeatherText>
          </Weather>
          <StartLogo />
          <SearchPill>
            <Search size={22} strokeWidth={2} color="#222" />
            <span>Search</span>
            <RacketLogo />
          </SearchPill>
          <Apps>
            <AppIcon><CopilotPre /></AppIcon>
            <AppIcon><TaskViewLogo /></AppIcon>
            <AppIcon><FolderLogo /></AppIcon>
            <AppIcon $active><EdgeLogo /></AppIcon>
            <AppIcon><StoreLogo /></AppIcon>
            <AppIcon><HexLogo /></AppIcon>
            <AppIcon><BlueAppLogo /></AppIcon>
          </Apps>
          <Tray>
            <TraySlot $w={40}><ChevronUp size={19} strokeWidth={1.8} /></TraySlot>
            <TraySlot $w={40}>
              <svg width="22" height="20" viewBox="0 0 22 20">
                <path d="M5 18a4 4 0 0 1-1-8C5 4 9 2 12 3c3 1 4 4 5 6 3 1 4 4 3 6-1 2-2 3-4 3z" fill="#8d8d8d" stroke="#333" />
                <path d="M3 14c4-3 9-3 17 0-1 3-2 4-4 4H5c-1 0-2-2-2-4z" fill="#eee" />
              </svg>
            </TraySlot>
            <TraySlot $w={40}><Wifi size={20} strokeWidth={1.6} /></TraySlot>
            <TraySlot $w={20}><Volume1 size={21} strokeWidth={1.5} /></TraySlot>
            <TraySlot $w={42}>
              <svg width="22" height="20" viewBox="0 0 22 20">
                <rect x="3" y="6" width="17" height="12" rx="2" fill="none" stroke="#111" strokeWidth="1.4" />
                <rect x="5" y="8" width="13" height="8" fill="#111" />
                <path d="M8 0L4 8h3l-1 5 5-7H8z" fill="#111" stroke="#e0eeb4" strokeWidth=".7" />
              </svg>
            </TraySlot>
            <Clock>
              9:02 PM
              <br />
              1/14/2024
            </Clock>
            <TraySlot $w={38}><Bell size={21} strokeWidth={1.4} /></TraySlot>
          </Tray>
        </Taskbar>
      </Screen>
    </>
  );
}
